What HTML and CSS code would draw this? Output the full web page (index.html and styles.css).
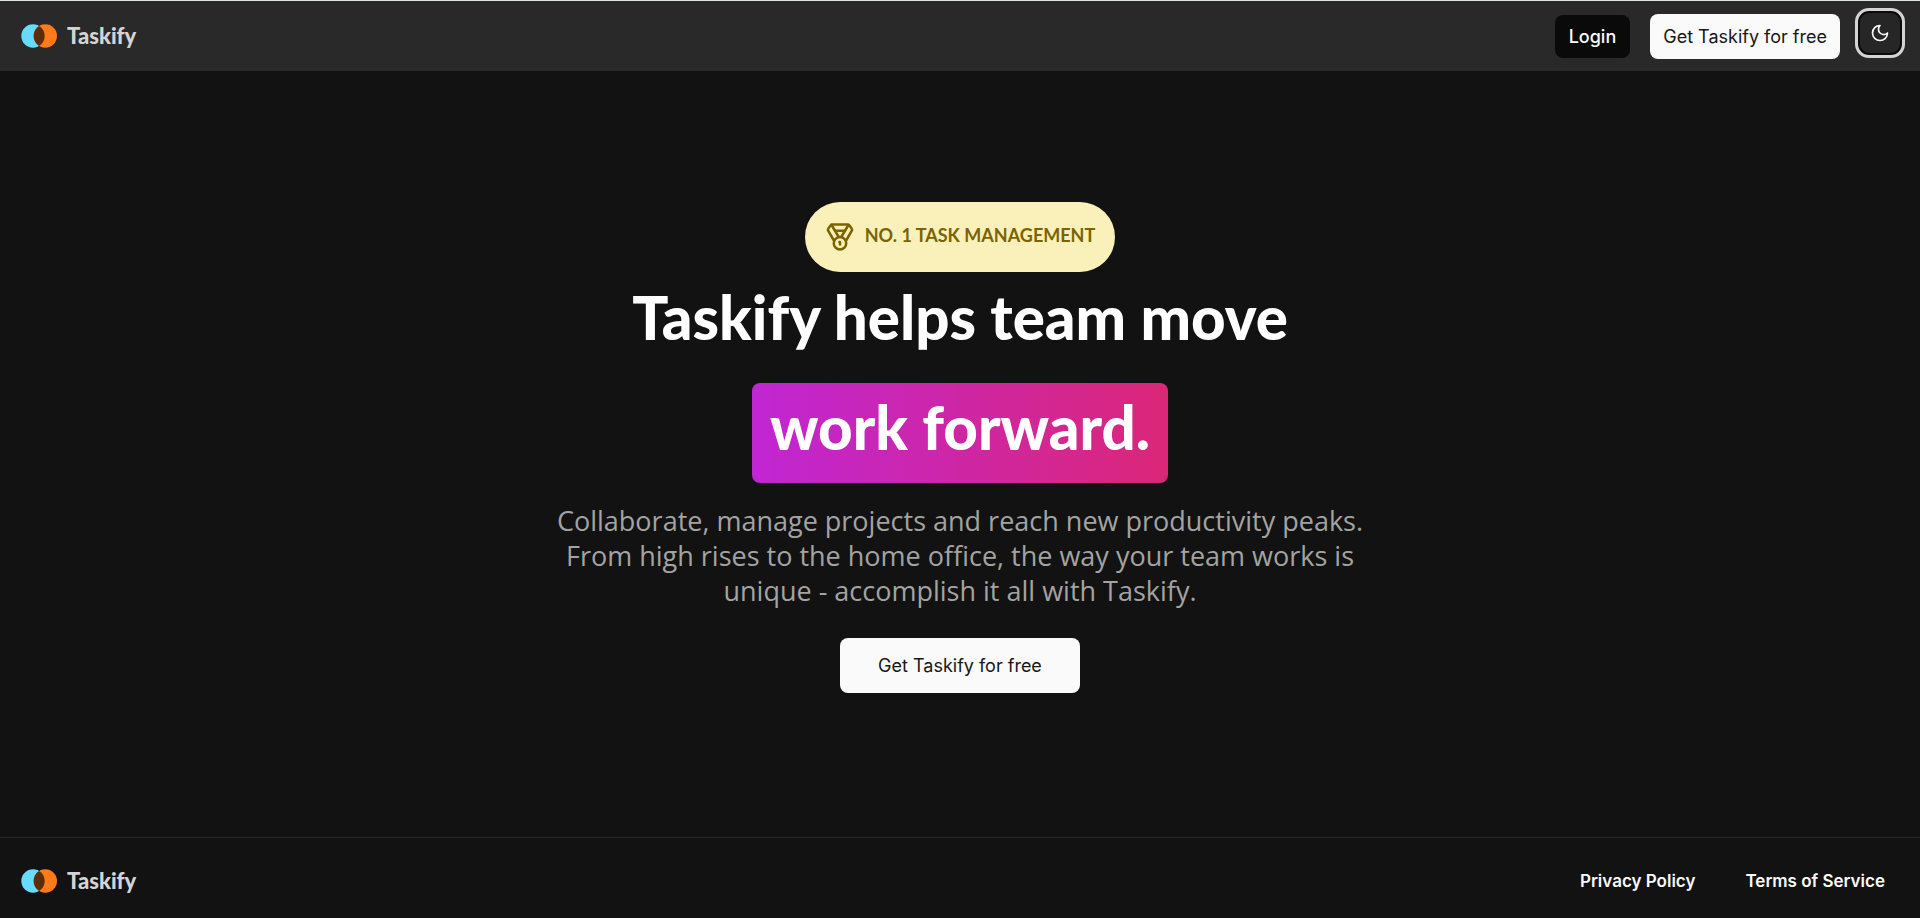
FILE: index.html
```html
<!DOCTYPE html>
<html lang="en">
<head>
<meta charset="utf-8">
<meta name="viewport" content="width=device-width, initial-scale=1">
<title>Taskify</title>
<link rel="stylesheet" href="styles.css">
</head>
<body>
<header class="navbar">
  <a class="logo" href="#">
    <svg class="logo-mark" viewBox="0 0 36 24" aria-hidden="true">
      <circle cx="12" cy="12" r="11.7" fill="#67dbff"/>
      <circle cx="24.3" cy="12" r="11.7" fill="#ff7a1a"/>
      <path d="M18.15 2.05A11.7 11.7 0 0 1 18.15 21.95A11.7 11.7 0 0 1 18.15 2.05Z" fill="#5c2c06"/>
    </svg>
    <span>Taskify</span>
  </a>
  <div class="actions">
    <a class="button button-dark" href="#">Login</a>
    <a class="button button-light" href="#">Get Taskify for free</a>
    <button class="theme-toggle" type="button" aria-label="Toggle theme">
      <svg viewBox="0 0 24 24" aria-hidden="true"><path d="M12 3a6 6 0 0 0 9 9 9 9 0 1 1-9-9Z"/></svg>
    </button>
  </div>
</header>
<main class="hero">
  <div class="badge">
    <svg viewBox="0 0 24 24" aria-hidden="true">
      <path d="M7.21 15 2.66 7.14a2 2 0 0 1 .13-2.2L4.4 2.8A2 2 0 0 1 6 2h12a2 2 0 0 1 1.6.8l1.6 2.14a2 2 0 0 1 .14 2.2L16.79 15"/>
      <path d="M11 12 5.12 2.2"/><path d="m13 12 5.88-9.8"/><path d="M8 7h8"/>
      <circle cx="12" cy="17" r="5"/><path d="M12 18v-2h-.5"/>
    </svg>
    <span>NO. 1 TASK MANAGEMENT</span>
  </div>
  <h1 class="title">Taskify helps team move</h1>
  <div class="highlight">work forward.</div>
  <p class="lead">Collaborate, manage projects and reach new productivity peaks. From high rises to the home office, the way your team works is unique - accomplish it all with Taskify.</p>
  <a class="button button-light button-large" href="#">Get Taskify for free</a>
</main>
<footer class="footer">
  <a class="logo" href="#">
    <svg class="logo-mark" viewBox="0 0 36 24" aria-hidden="true">
      <circle cx="12" cy="12" r="11.7" fill="#67dbff"/>
      <circle cx="24.3" cy="12" r="11.7" fill="#ff7a1a"/>
      <path d="M18.15 2.05A11.7 11.7 0 0 1 18.15 21.95A11.7 11.7 0 0 1 18.15 2.05Z" fill="#5c2c06"/>
    </svg>
    <span>Taskify</span>
  </a>
  <nav class="links">
    <a href="#">Privacy Policy</a>
    <a href="#">Terms of Service</a>
  </nav>
</footer>
</body>
</html>
```
FILE: styles.css
```css
* { box-sizing: border-box; }
body {
  margin: 0;
  min-height: 100vh;
  display: flex;
  flex-direction: column;
  background: #121212;
  color: #fafafa;
  font-family: Inter, "Liberation Sans", sans-serif;
  font-size: 18px;
}
a { color: inherit; text-decoration: none; }
.navbar {
  display: flex;
  align-items: center;
  justify-content: space-between;
  min-height: 71px;
  padding: 0 15px 0 20px;
  border-top: 1px solid #dfe5e3;
  background: #292929;
}
.logo {
  display: flex;
  align-items: center;
  gap: 9px;
  color: #d4d4d4;
  font: 900 22px/28px Lato, sans-serif;
}
.logo-mark { width: 38px; height: 24px; }
.actions { display: flex; align-items: center; gap: 20px; }
.button {
  padding: 0 13px;
  border-radius: 8px;
  font-size: 18px;
  line-height: 45px;
  white-space: nowrap;
}
.button-dark { background: #0a0a0a; padding: 0 14px; font-weight: 500; line-height: 43px; }
.button-light { background: #fafafa; color: #171717; }
.button-large { padding: 0 38px; line-height: 55px; }
.theme-toggle {
  display: grid;
  place-items: center;
  width: 50px;
  height: 50px;
  margin: 0 0 6px -5px;
  padding: 0;
  border: 3px solid #d4d4d4;
  border-radius: 14px;
  background: #262626;
  box-shadow: inset 0 0 0 2px #0a0a0a;
  color: #fafafa;
}
.theme-toggle svg { width: 20px; height: 20px; }
.theme-toggle svg, .badge svg {
  fill: none;
  stroke: currentColor;
  stroke-width: 2;
  stroke-linecap: round;
  stroke-linejoin: round;
}
.hero {
  flex: 1;
  display: flex;
  flex-direction: column;
  align-items: center;
  justify-content: center;
  padding: 0 20px 14px;
  text-align: center;
}
.badge {
  display: flex;
  align-items: center;
  gap: 10px;
  padding: 20px;
  border-radius: 35px;
  background: #faf0ba;
  color: #796400;
  font: 700 18px/26px Lato, sans-serif;
}
.badge svg { width: 30px; height: 30px; }
.badge span { padding-bottom: 4px; }
.title, .highlight {
  margin: 0;
  color: #fff;
  font: 900 60px/60px Lato, sans-serif;
}
.title { margin: 15px 0 36px; }
.highlight {
  padding: 14px 18px 26px;
  border-radius: 8px;
  background: linear-gradient(to right, #c026d3, #db2777);
}
.lead {
  max-width: 840px;
  margin: 20px 0 30px;
  color: #a3a3a3;
  font: 400 27px/35px "Open Sans", sans-serif;
}
.footer {
  display: flex;
  align-items: center;
  justify-content: space-between;
  min-height: 81px;
  padding: 6px 35px 0 20px;
  border-top: 1px solid #262626;
}
.links { display: flex; gap: 50px; font-size: 17px; font-weight: 600; }
```
